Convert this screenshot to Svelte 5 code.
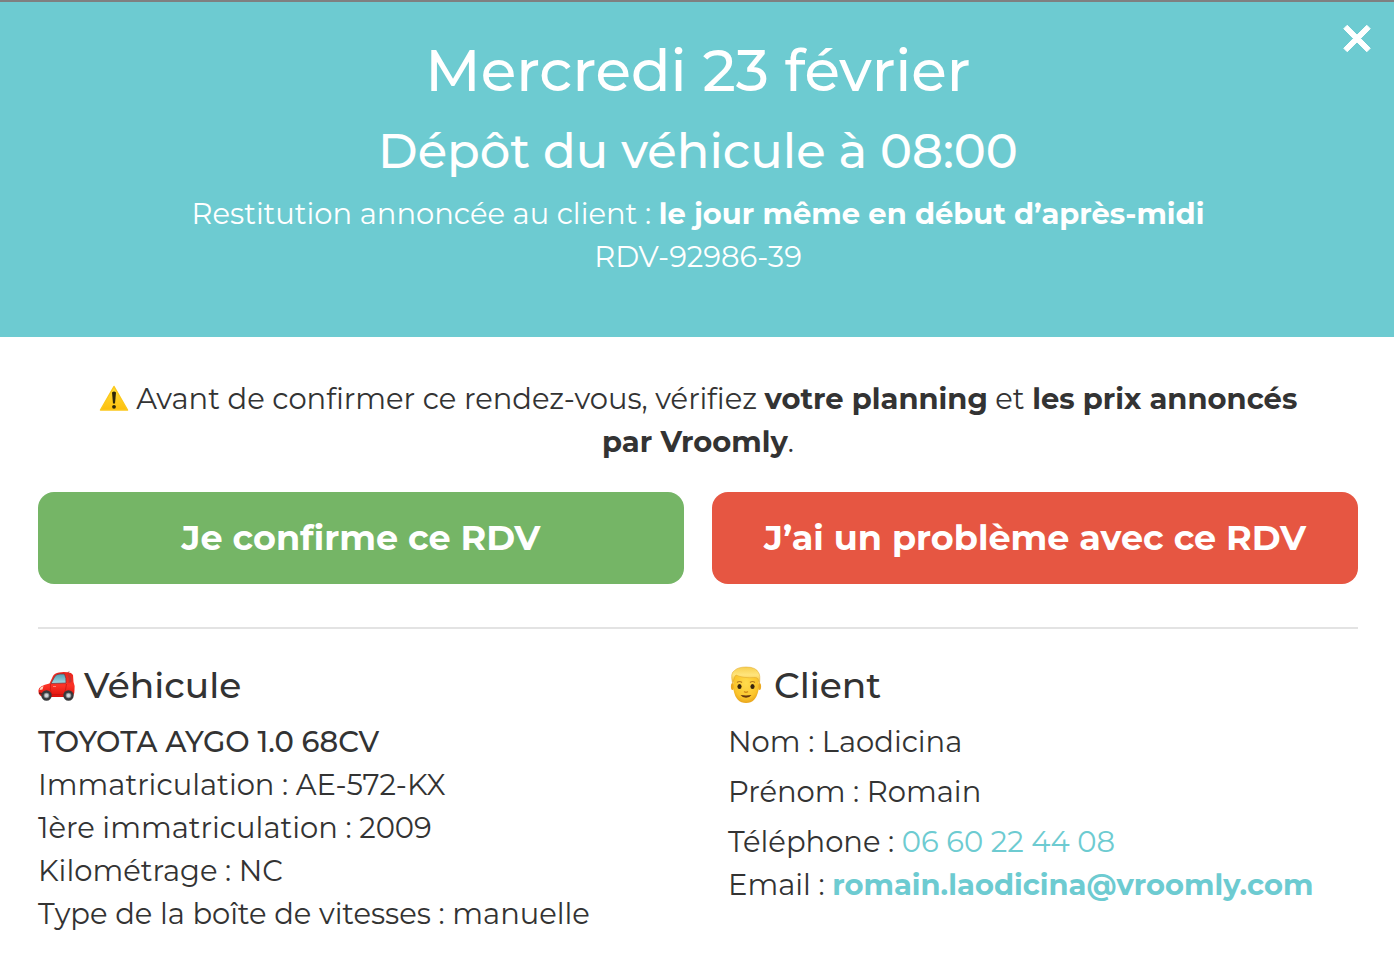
<script lang="ts">
  interface Props {
    onClose?: () => void;
    onConfirm?: () => void;
    onProblem?: () => void;
  }

  let { onClose, onConfirm, onProblem }: Props = $props();

  const vehicle = [
    { label: 'Immatriculation', value: 'AE-572-KX' },
    { label: '1ère immatriculation', value: '2009' },
    { label: 'Kilométrage', value: 'NC' },
    { label: 'Type de la boîte de vitesses', value: 'manuelle' },
  ];

  const client = {
    lastName: 'Laodicina',
    firstName: 'Romain',
    phone: '06 60 22 44 08',
    email: 'romain.laodicina@vroomly.com',
  };
</script>

<div class="modal">
  <header>
    <button class="close" aria-label="Fermer" onclick={() => onClose?.()}>
      <svg viewBox="0 0 28 28" width="28" height="28">
        <path
          d="M4.2 1.300L14 11.100L23.800 1.300L27.200 4.700L17.600 14.500L27.200 24.300L23.800 27.700L14 17.900L4.200 27.700L0.800 24.300L10.400 14.500L0.800 4.700Z"
          fill="#fff"
          stroke="#fff"
          stroke-linejoin="round"
        />
      </svg>
    </button>
    <h1>Mercredi 23 février</h1>
    <h2>Dépôt du véhicule à 08:00</h2>
    <p>Restitution annoncée au client : <strong>le jour même en début d’après-midi</strong></p>
    <p>RDV-92986-39</p>
  </header>

  <main>
    <p class="notice">
      <svg class="warning" viewBox="0 0 30 28" width="30" height="28" aria-hidden="true">
        <defs>
          <linearGradient id="warn" x1="0" y1="0" x2="0" y2="1">
            <stop offset="0" stop-color="#ffdf3a" />
            <stop offset="1" stop-color="#fdbf0d" />
          </linearGradient>
        </defs>
        <path d="M15 2.500L28.500 26H1.500Z" fill="url(#warn)" stroke="#fbc81c" stroke-width="1.500" stroke-linejoin="round" />
        <path d="M13 8.500Q15 6.500 17 8.500L16 19.500H14Z" fill="#2d2608" />
        <circle cx="15" cy="22.800" r="1.900" fill="#2d2608" />
      </svg>
      Avant de confirmer ce rendez-vous, vérifiez <strong>votre planning</strong> et
      <strong>les prix annoncés par Vroomly</strong>.
    </p>

    <div class="actions">
      <button class="btn confirm" onclick={() => onConfirm?.()}>Je confirme ce RDV</button>
      <button class="btn problem" onclick={() => onProblem?.()}>J’ai un problème avec ce RDV</button>
    </div>

    <hr />

    <div class="columns">
      <section>
        <h3>
          <svg viewBox="0 0 38 32" width="38" height="32" aria-hidden="true">
            <defs>
              <linearGradient id="paint" x1="0" y1="0" x2="0" y2="1">
                <stop offset="0" stop-color="#e8251d" />
                <stop offset="0.55" stop-color="#fb3226" />
                <stop offset="1" stop-color="#dd0f0b" />
              </linearGradient>
              <linearGradient id="glass" x1="0" y1="0" x2="0" y2="1">
                <stop offset="0" stop-color="#4f9eb2" />
                <stop offset="1" stop-color="#a4dbe4" />
              </linearGradient>
            </defs>
            <path d="M28.500 5.500L31 2.500" stroke="#844" stroke-width="1" />
            <path d="M0.500 21Q1 16.500 11.500 14.500L15 7Q16.500 4 21 3.500Q27 2.500 33 4L35 6L35.500 13Q37 16 36.500 21Q36.500 27 33 28H5Q1 27 0.500 23Z" fill="url(#paint)" />
            <path d="M13 14.500L16.500 8Q18 5 22 5L26.500 5Q28.500 9 28 14Z" fill="url(#glass)" stroke="#77323a" stroke-width="0.700" />
            <path d="M29.500 5.500H31.500Q34 9 33.500 13L30.500 14Q31.500 9.500 29.500 5.500Z" fill="#c33432" />
            <path d="M12.500 15Q11.500 20 14 26.500M28.500 15Q28 20 26 25.500H14" fill="none" stroke="#bd1712" stroke-width="0.700" />
            <path d="M15 17.500H18" stroke="#ff9b8f" stroke-width="0.800" />
            <path d="M2.500 18.500L5.500 17L4.500 20.500L1.500 21Z" fill="#ffd9c5" />
            <path d="M1 24L4 25" stroke="#6b1a1a" stroke-width="1.500" />
            <g fill="#8c9298" stroke="#38393b" stroke-width="2.400">
              <circle cx="8.500" cy="26.500" r="4" />
              <circle cx="30.500" cy="26.500" r="4" />
            </g>
            <g fill="#d3d6d8">
              <circle cx="8.500" cy="26.500" r="1.700" />
              <circle cx="30.500" cy="26.500" r="1.700" />
            </g>
          </svg>
          Véhicule
        </h3>
        <p class="model">TOYOTA AYGO 1.0 68CV</p>
        {#each vehicle as item}
          <p>{item.label} : {item.value}</p>
        {/each}
      </section>

      <section>
        <h3>
          <svg viewBox="0 0 38 38" width="38" height="38" aria-hidden="true">
            <defs>
              <radialGradient id="skin" cx="0.5" cy="0.4" r="0.7">
                <stop offset="0" stop-color="#ffdb4e" />
                <stop offset="0.65" stop-color="#fbc52c" />
                <stop offset="1" stop-color="#dc8f12" />
              </radialGradient>
              <linearGradient id="hair" x1="0" y1="0" x2="0" y2="1">
                <stop offset="0" stop-color="#f7cf50" />
                <stop offset="0.5" stop-color="#ffe57d" />
                <stop offset="1" stop-color="#f0b72d" />
              </linearGradient>
            </defs>
            <ellipse cx="4.500" cy="20.500" rx="1.600" ry="3.500" fill="#edaa22" />
            <ellipse cx="31.500" cy="20.500" rx="1.600" ry="3.500" fill="#edaa22" />
            <path d="M5 11Q6 4 18 4Q30 4 31 11L30.500 24Q28 37 18 37Q8 37 5.500 24Z" fill="url(#skin)" />
            <path d="M4.500 17Q2 7 6.500 4.500Q10 1 18 1Q28 1 30.500 6.500Q32.500 9 31.500 17L30 13Q29.500 11.500 27 11.500Q15 12.500 8 9Q6 11 6 13Z" fill="url(#hair)" stroke="#dfa628" stroke-width="0.500" />
            <path d="M9 16.500Q11.500 14.500 14 16.500M22 16.500Q24.500 14.500 27 16.500" fill="none" stroke="#b67b1e" stroke-width="1.200" />
            <ellipse cx="11.500" cy="20.500" rx="2.100" ry="2.500" fill="#38240f" />
            <ellipse cx="24.500" cy="20.500" rx="2.100" ry="2.500" fill="#38240f" />
            <path d="M16 25.500Q18 27 20 25.500" fill="none" stroke="#d18b17" stroke-width="1.300" />
            <path d="M12.500 29Q18 29.800 23.500 29Q21.500 31.800 18 31.800Q14.500 31.800 12.500 29Z" fill="#67370e" />
          </svg>
          Client
        </h3>
        <p class="spaced">Nom : {client.lastName}</p>
        <p class="spaced">Prénom : {client.firstName}</p>
        <p>Téléphone : <a href="tel:0660224408">{client.phone}</a></p>
        <p>Email : <a class="email" href="mailto:{client.email}">{client.email}</a></p>
      </section>
    </div>
  </main>
</div>

<style>
  :global(body) {
    margin: 0;
    background: #fff;
  }

  .modal {
    border-top: 2px solid #7f8080;
    font-family: Montserrat, Inter, sans-serif;
    font-size: 29px;
    line-height: 43px;
    color: #333;
  }

  h1,
  h2,
  h3,
  p {
    margin: 0;
    font-weight: 500;
  }

  p {
    font-weight: 400;
  }

  strong {
    font-weight: 700;
  }

  header {
    position: relative;
    padding: 29px 36px 59px 38px;
    background: #6dcbd1;
    color: #fff;
    text-align: center;
  }

  h1 {
    font-size: 58px;
    line-height: 80px;
  }

  h2 {
    margin: 10px 0 11px;
    font-size: 48px;
    line-height: 60px;
  }

  .close {
    position: absolute;
    top: 22px;
    right: 23px;
    padding: 0;
    border: 0;
    background: none;
    cursor: pointer;
  }

  .close svg {
    display: block;
  }

  main {
    padding: 40px 36px 38px 38px;
  }

  .notice {
    padding: 0 56px;
    text-align: center;
  }

  .warning {
    vertical-align: -3px;
  }

  .actions {
    display: grid;
    grid-template-columns: 1fr 1fr;
    gap: 28px;
    margin-top: 29px;
  }

  .btn {
    height: 92px;
    padding: 0 6px 2px;
    border: 0;
    border-radius: 16px;
    font: inherit;
    font-size: 35px;
    font-weight: 700;
    color: #fff;
    cursor: pointer;
  }

  .confirm {
    background: #75b566;
  }

  .problem {
    background: #e65642;
  }

  hr {
    margin: 43px 0 29px;
    border: 0;
    border-top: 2px solid #e3e3e3;
  }

  .columns {
    display: grid;
    grid-template-columns: 1fr 1fr;
    column-gap: 60px;
  }

  h3 {
    display: flex;
    align-items: center;
    gap: 8px;
    margin-bottom: 8px;
    font-size: 36px;
    line-height: 54px;
  }

  .model {
    font-weight: 500;
  }

  .spaced {
    margin-bottom: 7px;
  }

  a {
    color: #6dcbd1;
    text-decoration: none;
  }

  .email {
    font-weight: 700;
  }
</style>
